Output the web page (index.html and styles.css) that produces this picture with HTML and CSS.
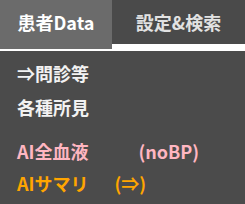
FILE: index.html
```html
<!DOCTYPE html>
<html lang="ja">
<head>
  <meta charset="UTF-8">
  <title>患者Data</title>
  <link rel="stylesheet" href="styles.css">
</head>
<body>

<div class="tabs">
  <div class="tab activo">患者Data</div>
  <div class="tab">設定&amp;検索</div>
</div>

<div class="panel">
  <div class="grupo">
    <div class="item">⇒問診等</div>
    <div class="item">各種所見</div>
  </div>
  <div class="grupo ai">
    <div class="item rosa">AI全血液<span class="nota nota-bp">(noBP)</span></div>
    <div class="item naranja">AIサマリ<span class="nota nota-flecha">(⇒)</span></div>
  </div>
</div>

</body>
</html>
```

FILE: styles.css
```css
body {
  margin: 0;
  background: #fff;
  font-family: "Noto Sans CJK JP", "Noto Sans", sans-serif;
  font-weight: bold;
  font-size: 18px;
}

.tabs {
  display: flex;
  align-items: flex-start;
}

.tab {
  flex: 1;
  height: 44px;
  line-height: 44px;
  text-align: center;
  background: #4a4a4a;
  color: #e2e2e2;
}

.tab.activo {
  flex: 0 0 112px;
  height: 49px;
  background: #6b6b6b;
  color: #fff;
}

.panel {
  margin-top: 2px;
  height: 153px;
  background: #4b4b4b;
  padding-left: 17px;
  box-sizing: border-box;
  overflow: hidden;
}

.grupo {
  padding-top: 5px;
}

.grupo .item {
  height: 34px;
  line-height: 34px;
  color: #f2f2f2;
}

.grupo.ai {
  padding-top: 0;
  margin-top: 11px;
}

.grupo.ai .item {
  height: 32px;
  line-height: 32px;
}

.grupo .rosa {
  color: #ffb6c1;
}

.grupo .naranja {
  color: #ffa500;
}

.nota-bp {
  margin-left: 50px;
}

.nota-flecha {
  margin-left: 26px;
}
```
